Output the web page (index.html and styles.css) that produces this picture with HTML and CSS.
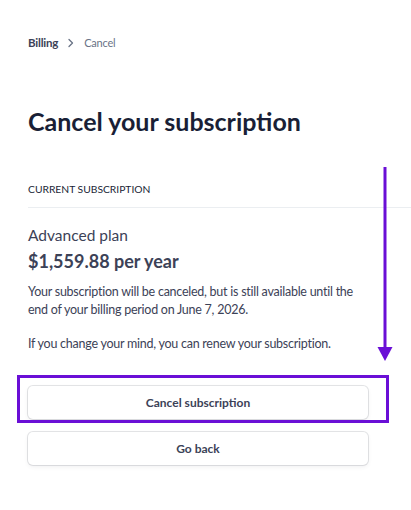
FILE: index.html
```html
<!DOCTYPE html>
<html lang="en">
<head>
<meta charset="utf-8">
<title>Cancel your subscription</title>
<link rel="stylesheet" href="styles.css">
</head>
<body>
<div class="page">
  <nav class="breadcrumb">
    <span class="crumb-link">Billing</span>
    <svg class="crumb-sep" width="8" height="12" viewBox="0 0 8 12"><path d="M2 2.5 5.5 6 2 9.5" fill="none" stroke="#697386" stroke-width="1.3" stroke-linecap="round" stroke-linejoin="round"/></svg>
    <span class="crumb-current">Cancel</span>
  </nav>
  <h1 class="title">Cancel your subscription</h1>
  <div class="section-head">Current subscription</div>
  <div class="content">
    <div class="plan-name">Advanced plan</div>
    <div class="plan-price">$1,559.88 per year</div>
    <p class="desc">Your subscription will be canceled, but is still available until the end of your billing period on June 7, 2026.</p>
    <p class="desc">If you change your mind, you can renew your subscription.</p>
    <div class="actions">
      <div class="btn-wrap">
        <button class="btn">Cancel subscription</button>
        <div class="highlight"></div>
      </div>
      <button class="btn">Go back</button>
    </div>
  </div>
  <svg class="arrow" width="20" height="200" viewBox="0 0 20 200">
    <line x1="10" y1="0" x2="10" y2="182" stroke="#6a0fd6" stroke-width="3"/>
    <polygon points="2.5,180 17.5,180 10,194" fill="#6a0fd6"/>
  </svg>
</div>
</body>
</html>
```
FILE: styles.css
```css
* { box-sizing: border-box; }
html, body { margin: 0; padding: 0; background: #fff; }
body {
  font-family: Lato, "Noto Sans", sans-serif;
  color: #3c4257;
  width: 411px;
  height: 510px;
  overflow: hidden;
}
.page {
  position: relative;
  padding: 34px 0 0 28px;
}
.breadcrumb {
  display: flex;
  align-items: center;
  gap: 9px;
  font-size: 11.5px;
  line-height: 18px;
  letter-spacing: -0.2px;
}
.crumb-link { color: #3c4257; font-weight: 700; }
.crumb-current { color: #697386; font-size: 11px; }
.title {
  margin: 53px 0 0;
  font-size: 25px;
  line-height: 32px;
  font-weight: 700;
  color: #1a1f36;
}
.section-head {
  margin-top: 44px;
  padding-bottom: 10px;
  font-size: 10.3px;
  line-height: 16px;
  text-transform: uppercase;
  font-weight: 400;
  color: #1a1f36;
  border-bottom: 1px solid #ebeef1;
}
.content { width: 340px; }
.plan-name {
  margin-top: 16px;
  font-size: 15.5px;
  line-height: 22px;
  font-weight: 400;
}
.plan-price {
  margin-top: 2px;
  font-size: 18px;
  line-height: 26px;
  font-weight: 700;
}
.desc {
  margin: 16px 0 0;
  font-size: 12.5px;
  line-height: 18px;
  letter-spacing: -0.25px;
}
.plan-price + .desc { margin-top: 9px; }
.actions {
  margin-top: 33px;
  display: flex;
  flex-direction: column;
  gap: 13px;
}
.btn-wrap { position: relative; }
.btn {
  display: block;
  width: 340px;
  height: 33px;
  border: 0;
  border-radius: 5px;
  background: #fff;
  font-family: inherit;
  font-size: 12px;
  font-weight: 700;
  color: #3c4257;
  box-shadow: 0 0 0 1px rgba(64, 68, 82, 0.14), 0 2px 4px rgba(64, 68, 82, 0.08);
}
.highlight {
  position: absolute;
  left: -11px;
  right: -21px;
  top: -11px;
  bottom: -4px;
  border: 3px solid #6a0fd6;
}
.arrow {
  position: absolute;
  left: 375px;
  top: 167px;
}
```
